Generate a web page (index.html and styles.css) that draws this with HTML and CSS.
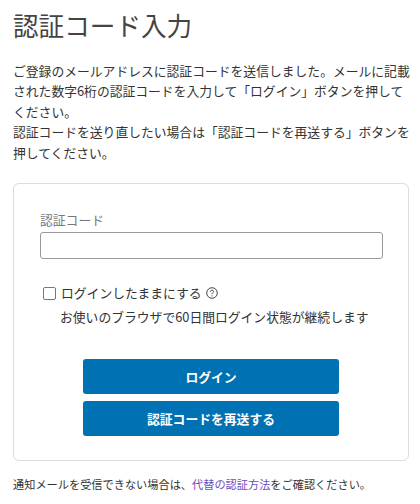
FILE: index.html
```html
<!DOCTYPE html>
<html lang="ja">
<head>
  <meta charset="UTF-8">
  <meta name="viewport" content="width=device-width, initial-scale=1.0">
  <title>認証コード入力</title>
  <link rel="stylesheet" href="styles.css">
</head>
<body>
  <h1 class="title">認証コード入力</h1>
  <p class="lead">ご登録のメールアドレスに認証コードを送信しました。メールに記載された数字6桁の認証コードを入力して「ログイン」ボタンを押してください。<br>認証コードを送り直したい場合は「認証コードを再送する」ボタンを押してください。</p>
  <div class="card">
    <label class="label" for="code">認証コード</label>
    <input class="input" id="code" type="text">
    <div class="keep">
      <span class="check"></span>
      <span>ログインしたままにする</span>
      <svg class="help" width="12" height="12" viewBox="0 0 12 12"><circle cx="6" cy="6" r="5.3" fill="none" stroke="#333" stroke-width="0.9"/><path d="M4.4 4.8C4.4 3.8 5.1 3.2 6 3.2C6.9 3.2 7.6 3.8 7.6 4.6C7.6 5.7 6 5.8 6 7.1" fill="none" stroke="#333" stroke-width="0.9"/><circle cx="6" cy="8.8" r="0.6" fill="#333"/></svg>
    </div>
    <p class="note">お使いのブラウザで60日間ログイン状態が継続します</p>
    <button class="button first">ログイン</button>
    <button class="button">認証コードを再送する</button>
  </div>
  <p class="foot">通知メールを受信できない場合は、<a href="#">代替の認証方法</a>をご確認ください。</p>
</body>
</html>
```

FILE: styles.css
```css
html, body {
  margin: 0;
  padding: 0;
  background: #fff;
  color: #333;
  font-family: "Noto Sans CJK JP", "Noto Sans", sans-serif;
  overflow: hidden;
}
body {
  padding: 0 11px 0 13px;
  height: 504px;
  box-sizing: border-box;
}
.title {
  margin: 0;
  padding-top: 7px;
  font-size: 25.6px;
  line-height: 36px;
  font-weight: 400;
  color: #444;
}
.lead {
  margin: 18px -4px 0 0;
  font-size: 12.8px;
  line-height: 20.48px;
}
.card {
  margin-top: 20px;
  height: 278px;
  box-sizing: border-box;
  border: 1px solid #ddd;
  border-radius: 6px;
  padding: 25px 26px 0;
}
.label {
  display: block;
  margin-bottom: 2px;
  font-size: 12.8px;
  line-height: 21px;
  color: #777;
}
.input {
  display: block;
  width: 343px;
  height: 27px;
  box-sizing: border-box;
  border: 1px solid #999;
  border-radius: 3px;
  background: #fff;
}
.keep {
  display: flex;
  align-items: center;
  margin: 24px 0 0 3px;
  font-size: 12.8px;
  line-height: 20px;
}
.check {
  width: 11px;
  height: 11px;
  margin-right: 5px;
  border: 1px solid #777;
  border-radius: 2px;
}
.help {
  margin-left: 4px;
}
.note {
  margin: 4px 0 0 20px;
  font-size: 12.8px;
  line-height: 20px;
}
.button {
  display: block;
  width: 256px;
  height: 35px;
  margin: 7px 0 0 43px;
  border: none;
  border-radius: 3px;
  background: #0071b3;
  color: #fff;
  font-family: inherit;
  font-size: 12.8px;
  font-weight: 700;
}
.first {
  margin-top: 32px;
}
.foot {
  margin: 14px 0 0;
  font-size: 11.2px;
  line-height: 18px;
}
.foot a {
  color: #6a4fc0;
  text-decoration: none;
}
```
